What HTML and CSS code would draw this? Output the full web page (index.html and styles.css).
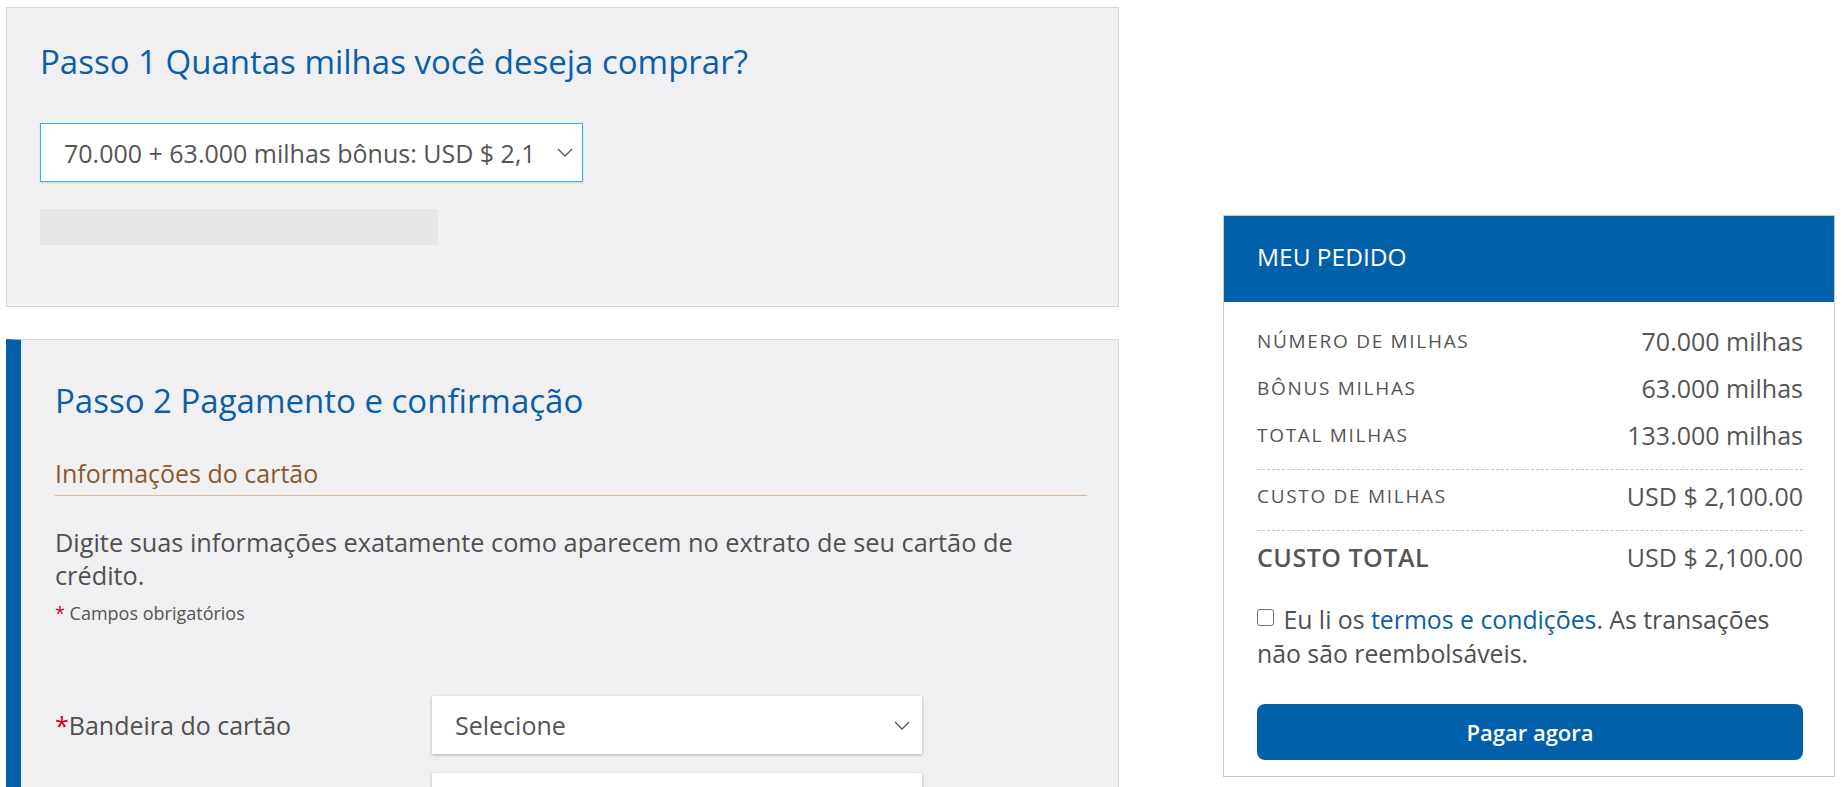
FILE: index.html
```html
<!DOCTYPE html>
<html lang="pt-BR">
<head>
<meta charset="utf-8">
<title>Comprar milhas</title>
<link rel="stylesheet" href="styles.css">
</head>
<body>
<div class="page">
  <main class="steps">
    <section class="step step-one">
      <h2 class="step-title">Passo 1 Quantas milhas você deseja comprar?</h2>
      <div class="miles-select">
        <span class="select-text">70.000 + 63.000 milhas bônus: USD $ 2,1</span>
        <svg class="chevron" width="16" height="9" viewBox="0 0 16 9"><path d="M1 1 L8 8 L15 1" fill="none" stroke="#555" stroke-width="1.3"/></svg>
      </div>
      <div class="promo-bar"></div>
    </section>

    <section class="step step-two">
      <h2 class="step-title">Passo 2 Pagamento e confirmação</h2>
      <h3 class="sub-title">Informações do cartão</h3>
      <p class="intro">Digite suas informações exatamente como aparecem no extrato de seu cartão de crédito.</p>
      <p class="required-note"><span class="req">*</span> Campos obrigatórios</p>

      <div class="form-row first">
        <div class="form-label"><span class="req">*</span>Bandeira do cartão</div>
        <div class="field-select">
          <span class="select-text">Selecione</span>
          <svg class="chevron" width="16" height="9" viewBox="0 0 16 9"><path d="M1 1 L8 8 L15 1" fill="none" stroke="#555" stroke-width="1.3"/></svg>
        </div>
      </div>
      <div class="form-row">
        <div class="form-label"></div>
        <div class="field-input"></div>
      </div>
    </section>
  </main>

  <aside class="order">
    <div class="order-head">MEU PEDIDO</div>
    <div class="order-body">
      <div class="order-group">
        <div class="order-row"><span class="o-label">NÚMERO DE MILHAS</span><span class="o-value">70.000 milhas</span></div>
        <div class="order-row"><span class="o-label">BÔNUS MILHAS</span><span class="o-value">63.000 milhas</span></div>
        <div class="order-row"><span class="o-label">TOTAL MILHAS</span><span class="o-value">133.000 milhas</span></div>
      </div>
      <div class="order-group">
        <div class="order-row"><span class="o-label">CUSTO DE MILHAS</span><span class="o-value">USD $ 2,100.00</span></div>
      </div>
      <div class="order-group last">
        <div class="order-row"><span class="o-label total">CUSTO TOTAL</span><span class="o-value">USD $ 2,100.00</span></div>
      </div>
      <p class="terms"><span class="term-line"><span class="checkbox"></span> Eu li os <a class="link" href="#">termos e condições</a>. As transações</span> <span class="term-line">não são reembolsáveis.</span></p>
      <button class="pay" type="button">Pagar agora</button>
    </div>
  </aside>
</div>
</body>
</html>
```

FILE: styles.css
```css
* { box-sizing: border-box; }

html, body {
  margin: 0;
  padding: 0;
  background: #ffffff;
}

body {
  font-family: "Open Sans", "Noto Sans", sans-serif;
  color: #4f4f4f;
  overflow: hidden;
}

.page {
  display: flex;
  align-items: flex-start;
  padding: 7px 0 0 6px;
  gap: 104px;
}

.steps {
  width: 1113px;
  flex: none;
}

.step {
  background: #f0f0f2;
  border: 1px solid #d6d6d8;
}

.step-one {
  height: 300px;
  padding: 32px 31px 0 33px;
}

.step-two {
  margin-top: 32px;
  border-left: 15px solid #0060a9;
  padding: 39px 31px 40px 34px;
  height: 520px;
}

.step-title {
  margin: 0;
  font-size: 33px;
  line-height: 44px;
  font-weight: 400;
  color: #0b5ea8;
}

.miles-select {
  margin-top: 39px;
  width: 543px;
  height: 59px;
  display: flex;
  align-items: center;
  background: #ffffff;
  border: 1px solid #33b8da;
  box-shadow: 0 1px 2px rgba(0, 0, 0, 0.12);
  padding: 0 9px 0 23px;
}

.select-text {
  flex: 1;
  font-size: 25px;
  line-height: 34px;
  color: #555555;
  white-space: nowrap;
  overflow: hidden;
}

.chevron {
  flex: none;
  display: block;
}

.promo-bar {
  margin-top: 27px;
  width: 398px;
  height: 36px;
  background: #e6e6e7;
}

.sub-title {
  margin: 33px 0 0;
  font-size: 25px;
  line-height: 34px;
  font-weight: 400;
  color: #8a5a2e;
  padding-bottom: 5px;
  border-bottom: 1px solid #dcb89a;
}

.intro {
  margin: 30px 0 0;
  font-size: 25.3px;
  line-height: 33px;
  color: #505050;
}

.required-note {
  margin: 8px 0 0;
  font-size: 18px;
  line-height: 26px;
  color: #555555;
}

.req {
  color: #d0021b;
}

.form-row {
  display: flex;
  align-items: center;
  margin-top: 19px;
}

.form-row.first {
  margin-top: 70px;
}

.form-label {
  width: 377px;
  flex: none;
  font-size: 25px;
  line-height: 34px;
  color: #505050;
}

.field-select,
.field-input {
  width: 490px;
  height: 58px;
  background: #ffffff;
  box-shadow: 0 1px 3px rgba(0, 0, 0, 0.28);
}

.field-select {
  display: flex;
  align-items: center;
  padding: 0 12px 0 23px;
}

.order {
  flex: none;
  width: 612px;
  margin-top: 208px;
  border: 1px solid #cacaca;
  background: #ffffff;
}

.order-head {
  background: #0060a9;
  color: #ffffff;
  font-size: 24.5px;
  line-height: 34px;
  height: 86px;
  padding: 24px 33px 0;
}

.order-body {
  padding: 0 31px 16px 33px;
}

.order-group {
  padding: 9px 0 17px;
  border-bottom: 1px dashed #c6c6c6;
}

.order-group:first-child {
  padding-top: 22px;
}

.order-group.last {
  border-bottom: none;
  padding-bottom: 0;
}

.order-row {
  display: flex;
  justify-content: space-between;
  align-items: flex-start;
  line-height: 34px;
}

.order-row + .order-row {
  margin-top: 13px;
}

.o-label {
  font-size: 19px;
  letter-spacing: 1.7px;
  color: #555555;
}

.o-label.total {
  font-size: 25px;
  font-weight: 600;
  letter-spacing: 0.5px;
  color: #555555;
}

.o-value {
  font-size: 25px;
  color: #555555;
}

.terms {
  margin: 28px 0 0;
  font-size: 24.8px;
  line-height: 34px;
  color: #505050;
}

.term-line {
  display: inline-block;
}

.checkbox {
  display: inline-block;
  width: 17px;
  height: 17px;
  border: 1px solid #6f6f6f;
  border-radius: 3px;
  background: #ffffff;
  vertical-align: 3px;
  margin-right: 3px;
}

.link {
  color: #0b5ea8;
  text-decoration: none;
}

.pay {
  display: block;
  width: 100%;
  height: 56px;
  margin-top: 34px;
  border: none;
  border-radius: 8px;
  background: #0060a9;
  color: #ffffff;
  font-family: "Open Sans", "Noto Sans", sans-serif;
  font-size: 22px;
  font-weight: 600;
  cursor: pointer;
}
```
